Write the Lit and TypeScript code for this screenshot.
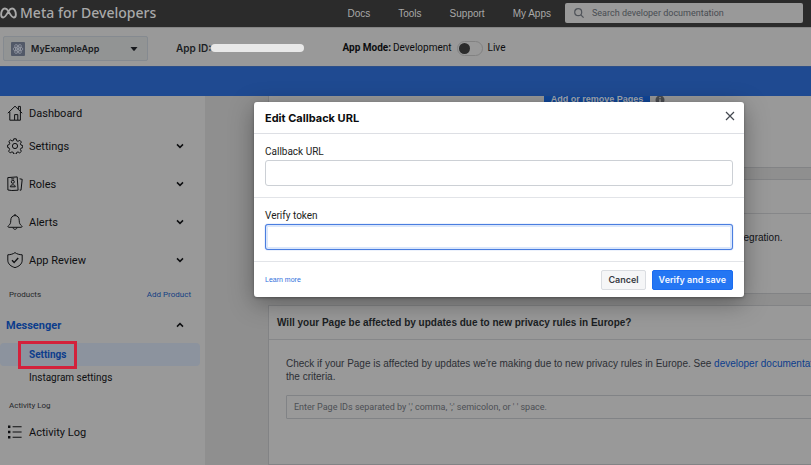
import { LitElement, html, css, svg } from "lit";
import { customElement } from "lit/decorators.js";
import { classMap } from "lit/directives/class-map.js";

const icons: Record<string, unknown> = {
  home: svg`<path d="M.8 8.2 8 1.2l7.2 7M2.8 6.8v8.4h10.6V6.8M7.6 15v-5.4h3.2V15M11.4 4.2V1.4h2v4.8"/>`,
  gear: svg`<circle cx="8" cy="8" r="2.6"/><path d="M6.8.8h2.4l.5 2 1.3.5 1.8-1 1.6 1.7-1 1.7.6 1.4 1.7.4v2.2l-1.8.5-.5 1.4 1 1.7-1.7 1.6-1.7-1-1.4.6-.4 1.7H6.8l-.5-1.8-1.4-.5-1.7 1-1.6-1.7 1-1.7L2 9.9.6 9.4V7.1l1.600-.5.6-1.400-1-1.700 1.700-1.500 1.600 1 1.300-.5z"/>`,
  roles: svg`<path d="M.8 1.600 10.200.9l.9 13.300-6.300.3L.9 14z"/><circle cx="5.800" cy="5.800" r="1.500"/><path d="M3.300 10.800c.2-1.500 1.200-2 2.500-2s2.300.5 2.500 2zM4.200 2.900h3M12.600 2.800l2.600.5-1.200 10.900-1.300-.2"/>`,
  bell: svg`<path d="M8 1.600c-2.700 0-4.200 2-4.200 4.600 0 3.400-.9 4.300-2.400 5.600-.8.8-.4 1.500.5 1.500h12.200c.9 0 1.300-.7.5-1.500-1.500-1.300-2.400-2.200-2.400-5.600 0-2.600-1.500-4.600-4.200-4.600zM7 1.400C7 .4 9 .4 9 1.400M6 13.500c.2 2.400 3.800 2.400 4 0"/>`,
  shield: svg`<path d="M8 .6C6.200 2 3.600 2.700.8 2.800v5.400c0 3.800 3.200 6.300 7.200 7.400 4-1.100 7.200-3.600 7.200-7.400V2.800C12.400 2.700 9.800 2 8 .6z"/><path stroke-width="1.400" d="m5 8.300 2.200 2.100 4-4.400"/>`,
  list: svg`<path stroke-width="1.100" d="M5.600 2.800h9M5.600 8h9M5.600 13.200h9"/><path stroke="none" fill="currentColor" d="M1 1.600h2.400v2.400H1zM1 6.800h2.400v2.400H1zM1 12h2.400v2.400H1z"/>`,
};

const icon = (name: string) => html`<svg class="icon" viewBox="0 0 16 16" aria-hidden="true">${icons[name]}</svg>`;

const chevron = (up = false) => html`<svg class="chevron" viewBox="0 0 8 6" aria-hidden="true">
  <path d=${up ? "M1 4.600 4 1.600l3 3" : "M1 1.400l3 3 3-3"} /></svg>`;

@customElement("top-bar")
class TopBar extends LitElement {
  static styles = css`
    :host { display: flex; align-items: center; height: 27px; background: #2b2b2b; color: #a9a9a9; font-size: 10px; }
    .brand { display: flex; align-items: center; gap: 3px; color: #a9a9a9; text-decoration: none; font: 500 14px/20px "Noto Sans", sans-serif; white-space: nowrap; padding-bottom: 2px; }
    .logo { width: 17px; height: 12px; fill: none; stroke: currentColor; stroke-width: 2; }
    nav { display: flex; gap: 28px; margin-left: auto; }
    nav a { color: #a9a9a9; text-decoration: none; font: 10px/14px "Liberation Sans", sans-serif; white-space: nowrap; }
    .search { display: flex; align-items: center; gap: 8px; box-sizing: border-box; width: 238px; height: 20px; margin: 0 8px 2px 14px; padding: 0 9px; border-radius: 2px; background: #999; color: #50545a; }
    .search svg { width: 10px; height: 10px; fill: none; stroke: currentColor; stroke-width: 1.2; flex: none; }
    .search input { flex: 1; min-width: 0; padding: 0; border: 0; outline: 0; background: none; font: 9px/14px Roboto, sans-serif; }
    .search input::placeholder { color: #484c52; opacity: 1; }
  `;
  render() {
    return html`
      <a class="brand" href="#">
        <svg class="logo" viewBox="0 0 18 12" aria-hidden="true">
          <path d="M9 4.300C7.800 2.300 6.700 1.200 5.200 1.200 2.900 1.200 1.200 4.300 1.200 7.600c0 1.900.9 3.100 2.300 3.100 1.700 0 2.900-1.700 5.500-6.400 1.200-2 2.300-3.100 3.800-3.100 2.300 0 4 3.100 4 6.400 0 1.900-.9 3.100-2.300 3.100-1.700 0-2.900-1.700-5.500-6.400z" />
        </svg>
        Meta for Developers
      </a>
      <nav>${["Docs", "Tools", "Support", "My Apps"].map((t) => html`<a href="#">${t}</a>`)}</nav>
      <label class="search">
        <svg viewBox="0 0 10 10" aria-hidden="true"><circle cx="4.200" cy="4.200" r="3.500" /><path d="m6.800 6.800 2.800 2.800" /></svg>
        <input type="search" aria-label="Search" placeholder="Search developer documentation" />
      </label>`;
  }
}

@customElement("app-bar")
class AppBar extends LitElement {
  static styles = css`
    :host { display: flex; align-items: center; box-sizing: border-box; height: 39px; padding: 0 3px; border-top: 1px solid #858585; background: #999; color: #0c0d0f; font: 10px/14px Roboto, sans-serif; white-space: nowrap; }
    .picker { display: flex; align-items: center; box-sizing: border-box; width: 145px; height: 25px; margin-top: 3px; padding: 0 9px 0 7px; border: 1px solid #858a90; border-radius: 2px; background: #929494; color: #17191d; font: 600 9px/14px Inter, sans-serif; }
    .app { width: 14px; height: 14px; margin-right: 6px; }
    .caret { width: 8px; height: 4px; margin-left: auto; fill: currentColor; }
    .id { display: flex; align-items: center; margin: 2px 0 0 28px; color: #1b1e23; font: 600 10px/14px Inter, sans-serif; }
    .redacted { width: 93px; height: 8px; border-radius: 4px; background: #e8e8e8; }
    .mode { display: flex; align-items: center; margin: 2px 0 0 38px; }
    .mode b { font-weight: 700; margin-right: 2px; }
    .switch { appearance: none; box-sizing: border-box; width: 26px; height: 15px; margin: 0 5px; padding: 1px; border: 1px solid #828282; border-radius: 8px; }
    .switch::before { content: ""; display: block; width: 11px; height: 11px; border-radius: 50%; background: #2b2b2b; }
  `;
  render() {
    return html`
      <button class="picker">
        <svg class="app" viewBox="0 0 14 14" aria-hidden="true">
          <rect width="14" height="14" rx="1" fill="#525968" />
          <g fill="none" stroke="#959aa5" stroke-width=".8">
            <ellipse cx="7" cy="7" rx="5" ry="2" /><ellipse cx="7" cy="7" rx="5" ry="2" transform="rotate(60 7 7)" /><ellipse cx="7" cy="7" rx="5" ry="2" transform="rotate(120 7 7)" />
          </g>
          <circle cx="7" cy="7" r="1" fill="#a3a8b2" />
        </svg>
        MyExampleApp
        <svg class="caret" viewBox="0 0 8 4" aria-hidden="true"><path d="M.5 0h7L4.500 3.700h-1z" /></svg>
      </button>
      <div class="id">App ID:<span class="redacted"></span></div>
      <div class="mode"><b>App Mode:</b><span>Development</span>
        <input class="switch" type="checkbox" role="switch" id="live" /><label for="live">Live</label>
      </div>`;
  }
}

@customElement("side-nav")
class SideNav extends LitElement {
  static styles = css`
    :host { display: block; box-sizing: border-box; width: 205px; flex: none; padding-top: 3px; background: #999; color: #0e0f11; font: 11px/16px Roboto, sans-serif; white-space: nowrap; }
    a { color: inherit; text-decoration: none; }
    .item { display: flex; align-items: center; gap: 6px; height: 38px; padding: 0 21px 0 7px; }
    .item span { padding-top: 2px; }
    .short { height: 28px; }
    .icon { width: 16px; height: 16px; fill: none; stroke: currentColor; stroke-width: 1; stroke-linejoin: round; }
    .chevron { width: 8px; height: 6px; margin-left: auto; fill: none; stroke: currentColor; stroke-width: 1.5; }
    .caption { display: flex; align-items: center; justify-content: space-between; height: 32px; padding: 0 14px 0 9px; color: #26282b; font-size: 8px; }
    .caption a { color: #143f83; }
    .messenger { padding-left: 6px; color: #0c3d8c; font-weight: 700; }
    .messenger .chevron { color: #0e0f11; }
    .sub { display: flex; align-items: center; height: 24px; padding-left: 29px; font-size: 10px; }
    .current { height: 23px; margin: 4px 5px 0 0; border-radius: 4px; background: #8c939e; color: #0c3d8c; font-weight: 700; }
    .mark { position: relative; }
    .mark::after { content: ""; position: absolute; inset: -6px -11px; border: 3px solid #d3213b; }
    .log { height: 20px; }
  `;
  render() {
    const items: [string, string, boolean][] = [
      ["home", "Dashboard", false],
      ["gear", "Settings", true],
      ["roles", "Roles", true],
      ["bell", "Alerts", true],
      ["shield", "App Review", true],
    ];
    return html`
      ${items.map(([i, label, opens]) => html`
        <a href="#" class=${classMap({ item: true, short: !opens })}>${icon(i)}<span>${label}</span>${opens ? chevron() : ""}</a>`)}
      <div class="caption"><span>Products</span><a href="#">Add Product</a></div>
      <a href="#" class="item short messenger"><span>Messenger</span>${chevron(true)}</a>
      <a href="#" class="sub current"><span class="mark">Settings</span></a>
      <a href="#" class="sub">Instagram settings</a>
      <div class="caption">Activity Log</div>
      <a href="#" class="item log">${icon("list")}<span>Activity Log</span></a>`;
  }
}

@customElement("page-content")
class PageContent extends LitElement {
  static styles = css`
    :host { display: block; flex: 1; min-width: 0; overflow: hidden; background: #8f8f8f; color: #2c2f35; font: 10px/13px "Liberation Sans", sans-serif; }
    .cards { display: flex; flex-direction: column; gap: 11px; margin: 0 -60px 0 63px; }
    .card { box-sizing: border-box; border: 1px solid #828385; background: #999; }
    .pages { display: flex; align-items: flex-start; gap: 5px; height: 73px; margin-top: -1px; padding-left: 275px; }
    .add { width: 106px; height: 20px; margin-top: -7px; padding: 0; border: 0; border-radius: 2px; background: #11479a; color: #a5a8ad; font: 700 9px/20px "Liberation Sans", sans-serif; white-space: nowrap; }
    .info { width: 10px; height: 10px; margin-top: -1px; }
    .messaging { height: 115px; }
    .messaging h2, .privacy h2 { box-sizing: border-box; height: 34px; margin: 0; padding: 0 8px; border-bottom: 1px solid #868789; color: #1b1e23; font: 700 10px/33px "Liberation Sans", sans-serif; }
    .messaging p { margin: 17px 0 0 464px; color: #111317; }
    .privacy { height: 160px; }
    .body { padding: 17px; }
    .body p { margin: 0 0 12px; white-space: nowrap; }
    .body a { color: #0c3d8c; text-decoration: none; }
    .ids { display: block; box-sizing: border-box; width: 100%; height: 24px; padding: 0 7px; border: 1px solid #818386; border-radius: 1px; background: #999; font: 9px/14px Roboto, sans-serif; }
    .ids::placeholder { color: #4c4f54; opacity: 1; }
  `;
  render() {
    return html`<div class="cards">
      <section class="card pages">
        <button class="add">Add or remove Pages</button>
        <svg class="info" viewBox="0 0 10 10" aria-hidden="true"><circle cx="5" cy="5" r="4.500" fill="#4a4d52" /><path d="M4.300 2h1.400v1.300H4.300zM4.300 4.200h1.400V8H4.300z" fill="#999" /></svg>
      </section>
      <section class="card messaging"><h2></h2><p>integration.</p></section>
      <section class="card privacy">
        <h2>Will your Page be affected by updates due to new privacy rules in Europe?</h2>
        <div class="body">
          <p>Check if your Page is affected by updates we're making due to new privacy rules in Europe. See <a href="#">developer documentation</a><br />the criteria.</p>
          <input class="ids" aria-label="Page IDs" placeholder="Enter Page IDs separated by ',' comma, ';' semicolon, or ' ' space." />
        </div>
      </section>
    </div>`;
  }
}

@customElement("callback-dialog")
class CallbackDialog extends LitElement {
  static styles = css`
    :host { position: absolute; inset: 0; box-sizing: border-box; padding: 102px 67px 0 254px; font: 10px/14px Roboto, sans-serif; color: #1c1e21; }
    .dialog { border-radius: 3px; background: #fff; box-shadow: 0 6px 24px rgba(0, 0, 0, 0.35), 0 1px 3px rgba(0, 0, 0, 0.3); }
    header { display: flex; align-items: center; justify-content: space-between; box-sizing: border-box; height: 32px; padding: 0 9px 0 11px; border-bottom: 1px solid #dddfe4; }
    h1 { margin: 0; font: 700 11px/16px Inter, sans-serif; color: #0b0c0e; }
    .close { display: flex; padding: 0; border: 0; background: none; margin-bottom: 3px; }
    .close svg { width: 10px; height: 10px; fill: none; stroke: #444950; stroke-width: 1.2; }
    .field { display: flex; flex-direction: column; gap: 1px; padding: 11px; border-bottom: 1px solid #e2e4e8; }
    .field input { box-sizing: border-box; width: 100%; height: 26px; padding: 0 8px; border: 1px solid #ccd0d5; border-radius: 3px; outline: 0; font: inherit; }
    .field .active { border-color: #4a7ee0; box-shadow: inset 0 0 0 2px #dbe7fb, 0 0 1px #4a7ee0; }
    footer { display: flex; align-items: center; gap: 6px; height: 35px; padding: 0 11px; }
    footer a { margin-right: auto; color: #2f6fdc; font: 7px/12px "Liberation Sans", sans-serif; text-decoration: none; }
    footer button { box-sizing: border-box; height: 20px; padding: 0 6px; border: 1px solid #dadde1; border-radius: 2px; background: #f5f6f7; color: #3a3e45; font: 600 9px/18px Inter, sans-serif; white-space: nowrap; }
    footer .primary { border-color: #1a6cf0; background: #2476f3; color: #f4f8ff; }
  `;
  render() {
    return html`<div class="dialog" role="dialog" aria-labelledby="title">
      <header>
        <h1 id="title">Edit Callback URL</h1>
        <button class="close" aria-label="Close"><svg viewBox="0 0 10 10" aria-hidden="true"><path d="m1 1 8 8M9 1 1 9" /></svg></button>
      </header>
      <div class="field"><label for="url">Callback URL</label><input id="url" type="text" /></div>
      <div class="field"><label for="token">Verify token</label><input id="token" class="active" type="text" /></div>
      <footer>
        <a href="#">Learn more</a>
        <button>Cancel</button>
        <button class="primary">Verify and save</button>
      </footer>
    </div>`;
  }
}

@customElement("app-root")
class AppRoot extends LitElement {
  static styles = css`
    :host { display: flex; flex-direction: column; position: relative; height: 100vh; overflow: hidden; }
    .banner { box-sizing: border-box; height: 30px; flex: none; border-top: 1px solid #2d4f88; background: #1f4a91; }
    top-bar, app-bar { flex: none; }
    main { display: flex; flex: 1; min-height: 0; }
  `;
  render() {
    return html`
      <top-bar></top-bar>
      <app-bar></app-bar>
      <div class="banner"></div>
      <main><side-nav></side-nav><page-content></page-content></main>
      <callback-dialog></callback-dialog>`;
  }
}
